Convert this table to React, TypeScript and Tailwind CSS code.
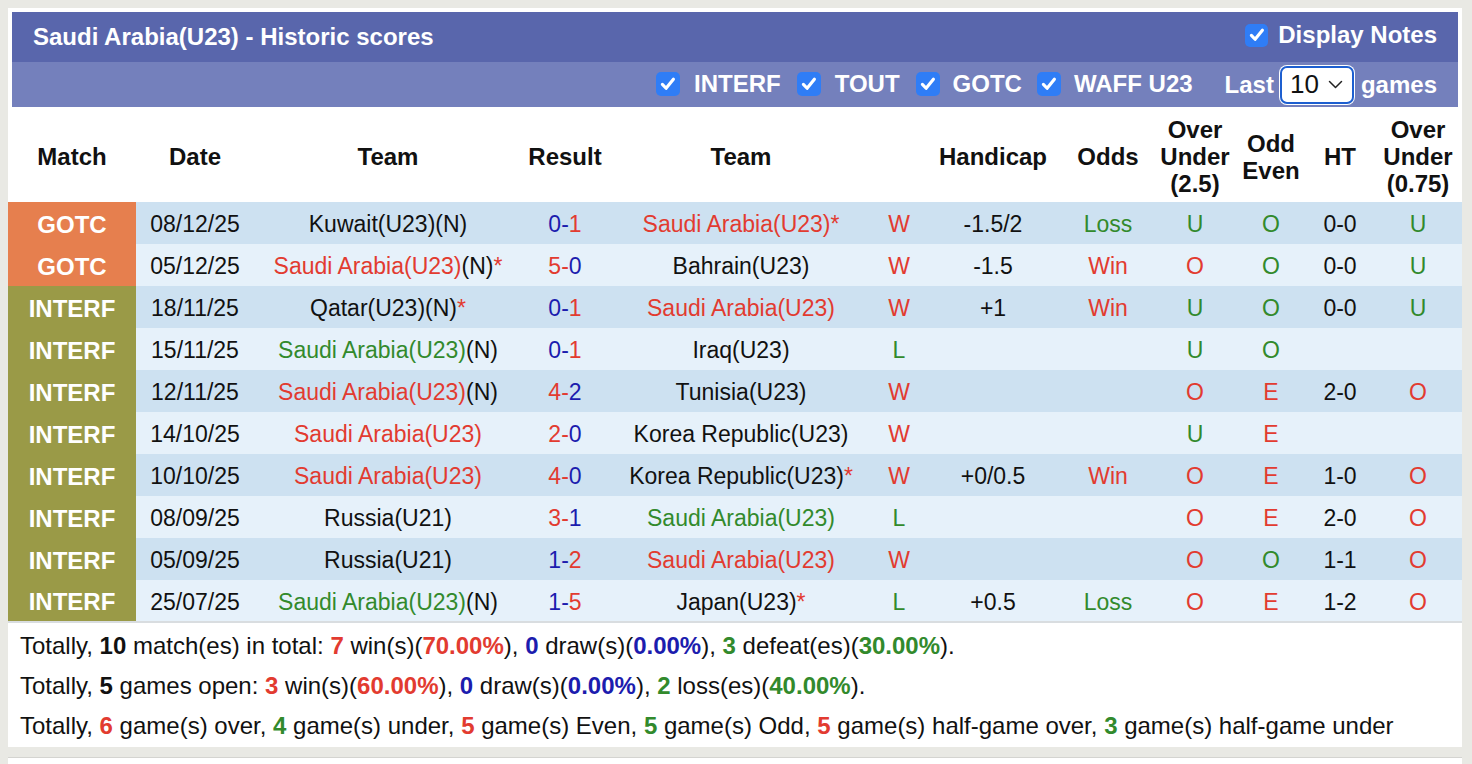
import React from "react";

const RED = "text-[#e23b30]";
const GREEN = "text-[#328a2c]";
const BLUE = "text-[#1c1cae]";

type Team = { name: string; c?: "r" | "g" | "k"; n?: boolean; star?: boolean };
type Row = {
  comp: "GOTC" | "INTERF";
  date: string;
  home: Team;
  hs: number;
  as: number;
  away: Team;
  res: "W" | "L";
  hc: string;
  odds: "" | "Win" | "Loss";
  ou: "O" | "U";
  oe: "O" | "E";
  ht: string;
  ou2: "" | "O" | "U";
};

const SA = "Saudi Arabia(U23)";

const rows: Row[] = [
  { comp: "GOTC", date: "08/12/25", home: { name: "Kuwait(U23)", n: true }, hs: 0, as: 1, away: { name: SA, c: "r", star: true }, res: "W", hc: "-1.5/2", odds: "Loss", ou: "U", oe: "O", ht: "0-0", ou2: "U" },
  { comp: "GOTC", date: "05/12/25", home: { name: SA, c: "r", n: true, star: true }, hs: 5, as: 0, away: { name: "Bahrain(U23)" }, res: "W", hc: "-1.5", odds: "Win", ou: "O", oe: "O", ht: "0-0", ou2: "U" },
  { comp: "INTERF", date: "18/11/25", home: { name: "Qatar(U23)", n: true, star: true }, hs: 0, as: 1, away: { name: SA, c: "r" }, res: "W", hc: "+1", odds: "Win", ou: "U", oe: "O", ht: "0-0", ou2: "U" },
  { comp: "INTERF", date: "15/11/25", home: { name: SA, c: "g", n: true }, hs: 0, as: 1, away: { name: "Iraq(U23)" }, res: "L", hc: "", odds: "", ou: "U", oe: "O", ht: "", ou2: "" },
  { comp: "INTERF", date: "12/11/25", home: { name: SA, c: "r", n: true }, hs: 4, as: 2, away: { name: "Tunisia(U23)" }, res: "W", hc: "", odds: "", ou: "O", oe: "E", ht: "2-0", ou2: "O" },
  { comp: "INTERF", date: "14/10/25", home: { name: SA, c: "r" }, hs: 2, as: 0, away: { name: "Korea Republic(U23)" }, res: "W", hc: "", odds: "", ou: "U", oe: "E", ht: "", ou2: "" },
  { comp: "INTERF", date: "10/10/25", home: { name: SA, c: "r" }, hs: 4, as: 0, away: { name: "Korea Republic(U23)", star: true }, res: "W", hc: "+0/0.5", odds: "Win", ou: "O", oe: "E", ht: "1-0", ou2: "O" },
  { comp: "INTERF", date: "08/09/25", home: { name: "Russia(U21)" }, hs: 3, as: 1, away: { name: SA, c: "g" }, res: "L", hc: "", odds: "", ou: "O", oe: "E", ht: "2-0", ou2: "O" },
  { comp: "INTERF", date: "05/09/25", home: { name: "Russia(U21)" }, hs: 1, as: 2, away: { name: SA, c: "r" }, res: "W", hc: "", odds: "", ou: "O", oe: "O", ht: "1-1", ou2: "O" },
  { comp: "INTERF", date: "25/07/25", home: { name: SA, c: "g", n: true }, hs: 1, as: 5, away: { name: "Japan(U23)", star: true }, res: "L", hc: "+0.5", odds: "Loss", ou: "O", oe: "E", ht: "1-2", ou2: "O" },
];

function TeamCell({ t }: { t: Team }) {
  const cls = t.c === "r" ? RED : t.c === "g" ? GREEN : "text-[#111]";
  return (
    <span className="whitespace-nowrap">
      <span className={cls}>{t.name}</span>
      {t.n && <span className="text-[#111]">(N)</span>}
      {t.star && <span className={RED}>*</span>}
    </span>
  );
}

function Check({ small }: { small?: boolean }) {
  return (
    <span
      className={`inline-flex shrink-0 items-center justify-center rounded-[5px] bg-[#2f7df6] ${small ? "w-[23px] h-[23px]" : "w-[24px] h-[24px]"}`}
    >
      <svg width="18" height="18" viewBox="0 0 16 16" fill="none">
        <path d="M3 8.4 L6.3 11.8 L12.8 3.8" stroke="white" strokeWidth="2.8" strokeLinecap="round" strokeLinejoin="round" />
      </svg>
    </span>
  );
}

export default function App() {
  return (
    <div className="min-h-[764px] bg-[#e9e9e4] pt-[8px] pl-[8px] pr-[10px] font-[family-name:'Liberation_Sans',Arial,sans-serif] text-[#111]">
      <div className="w-[1454px] bg-white pt-[4px]">
        {/* Title bar */}
        <div className="mx-[4px] h-[50px] bg-[#5966ac] flex items-center justify-between pl-[21px] pr-[21px]">
          <div className="text-white font-bold text-[24px]">Saudi Arabia(U23) - Historic scores</div>
          <div className="flex items-center gap-[10px] text-white font-bold text-[24px] relative top-[-2px]">
            <Check small />
            <span>Display Notes</span>
          </div>
        </div>
        {/* Filter bar */}
        <div className="mx-[4px] h-[45px] bg-[#7480bc] flex items-center justify-end pr-[21px] text-white font-bold text-[24px]">
          <div className="flex items-center gap-[14px] relative top-[-1px]">
            <Check />
            <span>INTERF</span>
          </div>
          <div className="flex items-center gap-[14px] ml-[16px] relative top-[-1px]">
            <Check />
            <span>TOUT</span>
          </div>
          <div className="flex items-center gap-[13px] ml-[16px] relative top-[-1px]">
            <Check />
            <span>GOTC</span>
          </div>
          <div className="flex items-center gap-[13px] ml-[15px] relative top-[-1px]">
            <Check />
            <span>WAFF U23</span>
          </div>
          <span className="ml-[32px]">Last</span>
          <div className="ml-[6px] h-[38px] w-[74px] rounded-[7px] border-[2px] border-[#1d5fd0] bg-white shadow-[0_0_0_1px_#ffffff] flex items-center pl-[8px] pr-[9px] justify-between text-[#111] font-normal text-[26px]">
            <span>10</span>
            <svg width="15" height="9" viewBox="0 0 15 9" fill="none">
              <path d="M1.5 1.5 L7.5 7.5 L13.5 1.5" stroke="#222" strokeWidth="1.5" strokeLinecap="round" strokeLinejoin="round" />
            </svg>
          </div>
          <span className="ml-[7px]">games</span>
        </div>

        {/* Table */}
        <table className="w-[1454px] border-collapse table-fixed text-[23px]">
          <colgroup>
            <col className="w-[128px]" />
            <col className="w-[118px]" />
            <col className="w-[268px]" />
            <col className="w-[86px]" />
            <col className="w-[266px]" />
            <col className="w-[50px]" />
            <col className="w-[138px]" />
            <col className="w-[92px]" />
            <col className="w-[82px]" />
            <col className="w-[70px]" />
            <col className="w-[68px]" />
            <col className="w-[88px]" />
          </colgroup>
          <thead>
            <tr className="h-[95px] font-bold text-center leading-[27px] text-[24px]">
              <th className="pt-[4px]">Match</th>
              <th className="pt-[4px]">Date</th>
              <th className="pt-[4px]">Team</th>
              <th className="pt-[4px]">Result</th>
              <th className="pt-[4px]">Team</th>
              <th></th>
              <th className="pt-[4px]">Handicap</th>
              <th className="pt-[4px]">Odds</th>
              <th className="pt-[4px]">
                Over
                <br />
                Under
                <br />
                (2.5)
              </th>
              <th className="pt-[4px]">
                Odd
                <br />
                Even
              </th>
              <th className="pt-[4px]">HT</th>
              <th className="pt-[4px]">
                Over
                <br />
                Under
                <br />
                (0.75)
              </th>
            </tr>
          </thead>
          <tbody>
            {rows.map((r, i) => {
              const bg = i % 2 === 0 ? "bg-[#cde1f1]" : "bg-[#e6f1fa]";
              const hsC = r.hs > r.as ? RED : BLUE;
              const asC = r.as > r.hs ? RED : BLUE;
              const last = i === rows.length - 1;
              return (
                <tr key={i} className={`h-[42px] text-center ${bg} ${last ? "border-b-[2px] border-[#d9dde0]" : ""} [&>td]:pt-[3px]`}>
                  <td className={`${r.comp === "GOTC" ? "bg-[#e67f4e]" : "bg-[#9a9a47]"} text-white font-bold text-[24px]`}>{r.comp}</td>
                  <td>{r.date}</td>
                  <td>
                    <TeamCell t={r.home} />
                  </td>
                  <td>
                    <span className={hsC}>{r.hs}-</span>
                    <span className={asC}>{r.as}</span>
                  </td>
                  <td>
                    <TeamCell t={r.away} />
                  </td>
                  <td className={r.res === "W" ? RED : GREEN}>{r.res}</td>
                  <td>{r.hc}</td>
                  <td className={r.odds === "Win" ? RED : GREEN}>{r.odds}</td>
                  <td className={r.ou === "O" ? RED : GREEN}>{r.ou}</td>
                  <td className={r.oe === "E" ? RED : GREEN}>{r.oe}</td>
                  <td>{r.ht}</td>
                  <td className={r.ou2 === "O" ? RED : GREEN}>{r.ou2}</td>
                </tr>
              );
            })}
          </tbody>
        </table>

        {/* Summary */}
        <div className="pl-[12px] pt-[3px] pb-[1px] text-[24px] text-[#111]">
          <div className="h-[40px] flex items-center">
            <span>
              Totally, <b>10</b> match(es) in total: <b className={RED}>7</b> win(s)(<b className={RED}>70.00%</b>), <b className={BLUE}>0</b> draw(s)(<b className={BLUE}>0.00%</b>), <b className={GREEN}>3</b> defeat(es)(<b className={GREEN}>30.00%</b>).
            </span>
          </div>
          <div className="h-[40px] flex items-center">
            <span>
              Totally, <b>5</b> games open: <b className={RED}>3</b> win(s)(<b className={RED}>60.00%</b>), <b className={BLUE}>0</b> draw(s)(<b className={BLUE}>0.00%</b>), <b className={GREEN}>2</b> loss(es)(<b className={GREEN}>40.00%</b>).
            </span>
          </div>
          <div className="h-[40px] flex items-center">
            <span>
              Totally, <b className={RED}>6</b> game(s) over, <b className={GREEN}>4</b> game(s) under, <b className={RED}>5</b> game(s) Even, <b className={GREEN}>5</b> game(s) Odd, <b className={RED}>5</b> game(s) half-game over, <b className={GREEN}>3</b> game(s) half-game under
            </span>
          </div>
        </div>
      </div>
      <div className="mt-[10px] w-[1454px] h-[20px] bg-white border-t border-[#d4d4d0]"></div>
    </div>
  );
}
